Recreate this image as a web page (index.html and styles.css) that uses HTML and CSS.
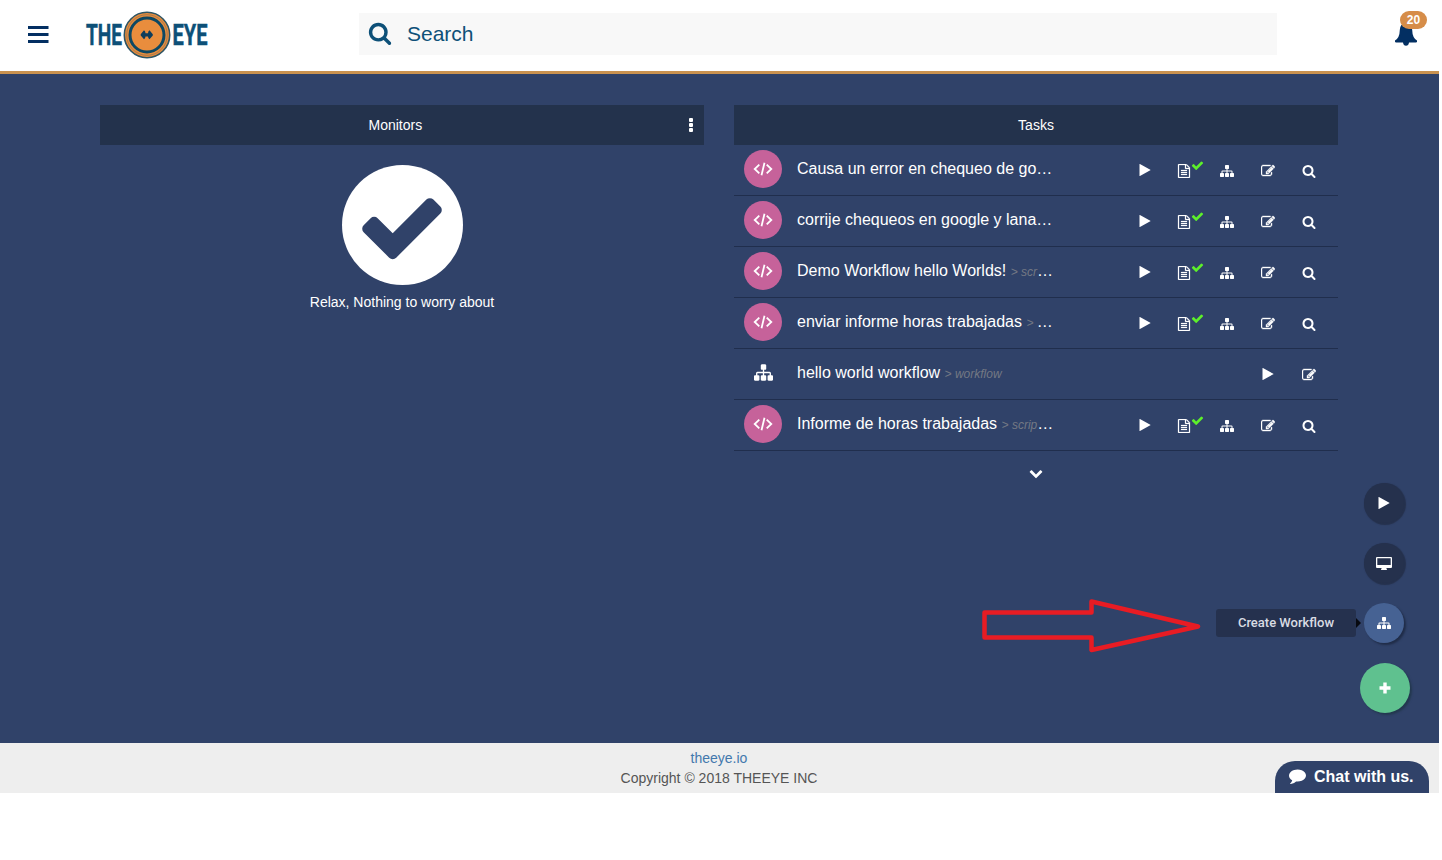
FILE: index.html
```html
<!DOCTYPE html>
<html lang="en">
<head>
<meta charset="utf-8">
<title>TheEye</title>
<link rel="stylesheet" href="styles.css">
</head>
<body>
<svg class="sprite" aria-hidden="true">
  <symbol id="search" viewBox="0 0 1792 1792"><path d="M1216 832q0-185-131.500-316.500t-316.500-131.500-316.500 131.500-131.500 316.500 131.500 316.500 316.500 131.500 316.500-131.500 131.500-316.500zm512 832q0 52-38 90t-90 38q-54 0-90-38l-343-342q-179 124-399 124-143 0-273.500-55.500t-225-150-150-225-55.500-273.500 55.500-273.500 150-225 225-150 273.500-55.500 273.500 55.500 225 150 150 225 55.500 273.500q0 220-124 399l343 343q37 37 37 90z"/></symbol>
  <symbol id="sitemap" viewBox="0 0 1792 1792"><path d="M1792 1248v320q0 40-28 68t-68 28h-320q-40 0-68-28t-28-68v-320q0-40 28-68t68-28h96v-192h-512v192h96q40 0 68 28t28 68v320q0 40-28 68t-68 28h-320q-40 0-68-28t-28-68v-320q0-40 28-68t68-28h96v-192h-512v192h96q40 0 68 28t28 68v320q0 40-28 68t-68 28h-320q-40 0-68-28t-28-68v-320q0-40 28-68t68-28h96v-192q0-52 38-90t90-38h512v-192h-96q-40 0-68-28t-28-68v-320q0-40 28-68t68-28h320q40 0 68 28t28 68v320q0 40-28 68t-68 28h-96v192h512q52 0 90 38t38 90v192h96q40 0 68 28t28 68z"/></symbol>
  <symbol id="edit" viewBox="0 0 1792 1792"><path stroke="currentColor" stroke-width="50" d="M888 1184l116-116-152-152-116 116v56h96v96h56zm440-720q-16-16-33 1l-350 350q-17 17-1 33t33-1l350-350q17-17 1-33zm80 594v190q0 119-84.500 203.500t-203.500 84.500h-832q-119 0-203.500-84.500t-84.500-203.500v-832q0-119 84.500-203.500t203.500-84.500h832q63 0 117 25 15 7 18 23 3 17-9 29l-49 49q-14 14-32 8-23-6-45-6h-832q-66 0-113 47t-47 113v832q0 66 47 113t113 47h832q66 0 113-47t47-113v-126q0-13 9-22l64-64q15-15 35-7t20 29zm-96-738l288 288-672 672h-288v-288zm444 132l-92 92-288-288 92-92q28-28 68-28t68 28l152 152q28 28 28 68t-28 68z"/></symbol>
  <symbol id="check" viewBox="0 0 1792 1792"><path d="M1671 566q0 40-28 68l-724 724-136 136q-28 28-68 28t-68-28l-136-136-362-362q-28-28-28-68t28-68l136-136q28-28 68-28t68 28l294 295 656-657q28-28 68-28t68 28l136 136q28 28 28 68z"/></symbol>
  <symbol id="play" viewBox="0 0 1792 1792"><path d="M1576 927l-1328 738q-23 13-39.500 3t-16.500-36v-1472q0-26 16.500-36t39.500 3l1328 738q23 13 23 31t-23 31z"/></symbol>
  <symbol id="file" viewBox="0 0 1792 1792"><path stroke="currentColor" stroke-width="30" d="M1596 380q28 28 48 76t20 88v1152q0 40-28 68t-68 28h-1344q-40 0-68-28t-28-68v-1600q0-40 28-68t68-28h896q40 0 88 20t76 48zm-444-244v376h376q-10-29-22-41l-313-313q-12-12-41-22zm384 1528v-1024h-416q-40 0-68-28t-28-68v-416h-768v1536h1280zm-1024-864q0-14 9-23t23-9h704q14 0 23 9t9 23v64q0 14-9 23t-23 9h-704q-14 0-23-9t-9-23v-64zm736 224q14 0 23 9t9 23v64q0 14-9 23t-23 9h-704q-14 0-23-9t-9-23v-64q0-14 9-23t23-9h704zm0 256q14 0 23 9t9 23v64q0 14-9 23t-23 9h-704q-14 0-23-9t-9-23v-64q0-14 9-23t23-9h704z"/></symbol>
  <symbol id="comment" viewBox="0 0 1792 1792"><path d="M1792 896q0 174-120 321.500t-326 233-450 85.500q-70 0-145-8-198 175-460 242-49 14-114 22-17 2-30.500-9t-17.500-29v-1q-3-4-.5-12t2-10 4.500-9.500l6-9 7-8.500 8-9q7-8 31-34.500t34.500-38 31-39.500 32.500-51 27-59 26-76q-157-89-247.500-220t-90.500-281q0-130 71-248.500t191-204.500 286-136.500 348-50.500q244 0 450 85.500t326 233 120 321.500z"/></symbol>
  <symbol id="chevron" viewBox="0 0 1792 1792"><path d="M1683 808l-742 741q-19 19-45 19t-45-19l-742-741q-19-19-19-45.500t19-45.500l166-165q19-19 45-19t45 19l531 531 531-531q19-19 45-19t45 19l166 165q19 19 19 45.500t-19 45.500z"/></symbol>
  <symbol id="code" viewBox="0 0 20 16"><path d="M6.300 3.600 1.700 8l4.600 4.400M13.700 3.600 18.300 8l-4.600 4.400M11.500 1.700 8.500 14.300" fill="none" stroke="currentColor" stroke-width="1.800"/></symbol>
</svg>

<header class="topbar">
  <svg class="menu" viewBox="0 0 21 17"><path d="M0 0h20.500v3H0zM0 7h20.500v3H0zM0 14h20.500v3H0z"/></svg>
  <svg class="logo" viewBox="0 0 128 50">
    <text x="1" y="35.200" textLength="36" lengthAdjust="spacingAndGlyphs">THE</text>
    <text x="87.500" y="35.200" textLength="35" lengthAdjust="spacingAndGlyphs">EYE</text>
    <circle cx="62" cy="25" r="22.700" fill="#e98d3d" stroke="#2d5565" stroke-width="1.600"/>
    <circle cx="62" cy="25" r="20.300" fill="none" stroke="#8d7150" stroke-width=".7"/>
    <circle cx="62" cy="25" r="17" fill="none" stroke="#0d4863" stroke-width="3"/>
    <path d="M55.700 24.200 59 20.200q1.500 1 1.500 3h2.500q0-2 1.500-3l3.300 4v1.200l-3.300 3.800q-1.500-1-1.500-2.800h-2.500q0 1.800-1.500 2.800l-3.300-3.800z" fill="#0d3d5c"/>
  </svg>
  <div class="searchbox"><svg class="search-icon"><use href="#search"/></svg><span>Search</span></div>
  <div class="alerts"><svg class="bell" viewBox="0 0 24 24"><path d="M12 1q6 .5 6.200 7 .2 8 4.800 10.500.5 2-1 2H15q-.5 3.300-3 3.300t-3-3.300H2q-1.500 0-1-2Q5.600 16 5.800 8 6 1.500 12 1z"/></svg><span class="badge">20</span></div>
</header>

<main class="dashboard">
  <section class="panel">
    <div class="panel-head monitors-head"><span>Monitors</span><span class="dots"><i></i><i></i><i></i></span></div>
    <div class="relax">
      <div class="ok"><svg><use href="#check"/></svg></div>
      <p>Relax, Nothing to worry about</p>
    </div>
  </section>
  <section class="panel">
    <div class="panel-head"><span>Tasks</span></div>
    <ul class="tasks" id="tasks"></ul>
    <div class="more"><svg class="ico"><use href="#chevron"/></svg></div>
  </section>

  <svg class="pointer" viewBox="0 0 220 56"><path d="M3.500 13.500H110.500V2.500L217 27.500 110.500 51V38.500H3.500z"/></svg>
  <div class="tooltip">Create Workflow</div>
  <div class="fabs">
    <div class="fab"><svg class="ico"><use href="#play"/></svg></div>
    <div class="fab"><svg class="monitor" viewBox="0 0 16 13"><path fill-rule="evenodd" d="M1 0h14q1 0 1 1v9q0 1-1 1h-4.500v1q.5 0 .5 1H5q0-1 .5-1v-1H1q-1 0-1-1V1q0-1 1-1zM1.300 1.200v6.900h13.400V1.200z"/></svg></div>
    <div class="fab active"><svg class="ico"><use href="#sitemap"/></svg></div>
    <div class="fab add"><svg class="plus" viewBox="0 0 12 12"><path d="M4.300.5h3.400v3.800h3.800v3.400H7.700v3.800H4.300V7.700H.5V4.300h3.800z"/></svg></div>
  </div>
</main>

<footer class="footer">
  <a>theeye.io</a>
  <span>Copyright © 2018 THEEYE INC</span>
  <div class="chat"><svg><use href="#comment"/></svg><span>Chat with us.</span></div>
</footer>
<script src="tasks.js"></script>
</body>
</html>
```

FILE: styles.css
```css
* { box-sizing: border-box; }
body { margin: 0; width: 1439px; background: #fff; font: 14px/20px "Liberation Sans", Arial, sans-serif; color: #fff; }
svg { display: block; fill: currentColor; }
.sprite { position: absolute; width: 0; height: 0; }

.topbar { display: flex; height: 74px; border-bottom: 3px solid #c99250; color: #032f62; background: #fff; }
.menu { width: 21px; height: 17px; margin: 26px 0 0 28px; }
.logo { width: 128px; height: 50px; margin: 10px 0 0 36px; }
.logo text { font: 700 30px Roboto, sans-serif; fill: #0d5078; stroke: #0d5078; stroke-width: .5; }
.searchbox { display: flex; align-items: center; width: 918px; height: 42px; margin: 13px 0 0 146px; padding-left: 9px; gap: 15px; background: #f8f8f8; color: #0d5078; font-size: 21px; }
.search-icon { width: 24px; height: 24px; margin-top: -3px; }
.alerts { position: relative; margin: 22px 0 0 117px; }
.bell { width: 24px; height: 24px; }
.badge { position: absolute; left: 6px; top: -11px; width: 27px; height: 18px; border-radius: 9px; background: #d68d49; color: #fff; font: 700 12px/18px "Liberation Sans", sans-serif; text-align: center; }

.dashboard { position: relative; display: flex; gap: 30px; height: 669px; padding: 31px 100px 0; background: #304269; }
.panel { width: 604px; }
.panel-head { display: flex; align-items: center; justify-content: center; height: 40px; background: #23324c; }
.monitors-head { padding-left: 268.500px; justify-content: space-between; padding-right: 11px; }
.dots { display: grid; gap: 1px; }
.dots i { width: 4px; height: 4px; border-radius: 1px; background: #fff; }
.relax { display: flex; flex-direction: column; align-items: center; padding: 20px 0 0; }
.ok { display: grid; place-items: center; width: 121px; height: 120px; border-radius: 50%; background: #fff; color: #304269; }
.ok svg { width: 92px; height: 92px; margin-top: 4px; }
.relax p { margin: 7px 0 0; }

.tasks { margin: 0; padding: 0; list-style: none; }
.task { display: flex; height: 51px; padding: 5px 9px 0 10px; border-bottom: 1px solid #202e4d; }
.avatar { display: grid; place-items: center; width: 38px; height: 38px; border-radius: 50%; }
.avatar.script { background: #c6629a; }
.avatar svg { width: 20px; height: 16px; }
.avatar:not(.script) svg { width: 19px; height: 19px; margin-top: -2px; }
.name { width: 262px; margin: 8px 0 0 15px; white-space: nowrap; font-size: 16px; line-height: 21px; }
.name small { font-size: 12px; font-style: italic; color: #747984; }
.actions { display: flex; margin: 13px 0 0 auto; }
.action { display: flex; justify-content: center; width: 41px; height: 14px; position: relative; }
.ico { width: 14px; height: 14px; }
.action.search, .action.sitemap { padding-top: 1px; }
.action.edit { padding-top: 1px; }
.action.search .ico, .action.edit .ico, .action.sitemap .ico { flex: none; }
.action.file { padding: 1px 3px 0 0; }
.action.file .ico { flex: none; }
.tick { position: absolute; left: 26px; top: -4px; width: 13px; height: 13px; color: #5df02a; }
.more { display: flex; justify-content: center; padding-top: 15px; }

.pointer { position: absolute; left: 981px; top: 525px; width: 220px; height: 56px; fill: none; stroke: #e81c24; stroke-width: 4.500; stroke-linejoin: round; }
.tooltip { position: absolute; left: 1216px; top: 535px; width: 140px; height: 28px; border-radius: 3px; background: #25314e; color: #d9dce3; font: 500 13px/27px Roboto, sans-serif; text-align: center; }
.tooltip::after { content: ""; position: absolute; left: 140px; top: 9px; border: 5px solid transparent; border-left-color: #080a10; border-right: 0; }
.fabs { position: absolute; left: 1360px; top: 409px; display: flex; flex-direction: column; gap: 20px; width: 50px; }
.fab { display: grid; place-items: center; width: 40px; height: 40px; margin-left: 4px; border-radius: 50%; background: #25314d; box-shadow: 1px 1px 1px 1px #25314d; }
.fab.active { background: #466293; box-shadow: 2px 2px 2px #202d49; }
.fab.add { width: 50px; height: 50px; margin-left: 0; background: #5fc18f; box-shadow: 2px 2px 2px #23384f; }
.monitor { width: 16px; height: 13px; }
.plus { width: 12px; height: 12px; }

.footer { position: relative; display: flex; flex-direction: column; align-items: center; height: 50px; padding: 5px 1px 0 0; background: #eee; color: #555; }
.footer a { color: #4378ad; }
.chat { position: absolute; right: 10px; bottom: 0; display: flex; align-items: center; gap: 8px; width: 154px; height: 32px; padding-left: 14px; border-radius: 20px 20px 0 0; background: #304269; color: #fff; font-size: 16px; font-weight: 700; }
.chat svg { width: 17px; height: 17px; margin-top: -3px; }
```

FILE: tasks.js
```js
const tasks = [
  { name: "Causa un error en chequeo de go…" },
  { name: "corrije chequeos en google y lana…" },
  { name: "Demo Workflow hello Worlds!", note: "&gt; scr", cut: true },
  { name: "enviar informe horas trabajadas", note: "&gt; ", cut: true },
  { name: "hello world workflow", note: "&gt; workflow", flow: true },
  { name: "Informe de horas trabajadas", note: "&gt; scrip", cut: true }
];
const icon = (id, cls = "ico") => `<svg class="${cls}"><use href="#${id}"/></svg>`;
document.getElementById("tasks").innerHTML = tasks.map(({ name, note, cut, flow }) => {
  const actions = flow ? ["play", "edit"] : ["play", "file", "sitemap", "edit", "search"];
  return `<li class="task">
    <div class="avatar ${flow ? "" : "script"}">${icon(flow ? "sitemap" : "code", "")}</div>
    <div class="name">${name}${note ? ` <small>${note}</small>` : ""}${cut ? "…" : ""}</div>
    <div class="actions">${actions.map(a =>
      `<span class="action ${a}">${icon(a)}${a === "file" ? icon("check", "tick") : ""}</span>`).join("")}</div>
  </li>`;
}).join("");
```
